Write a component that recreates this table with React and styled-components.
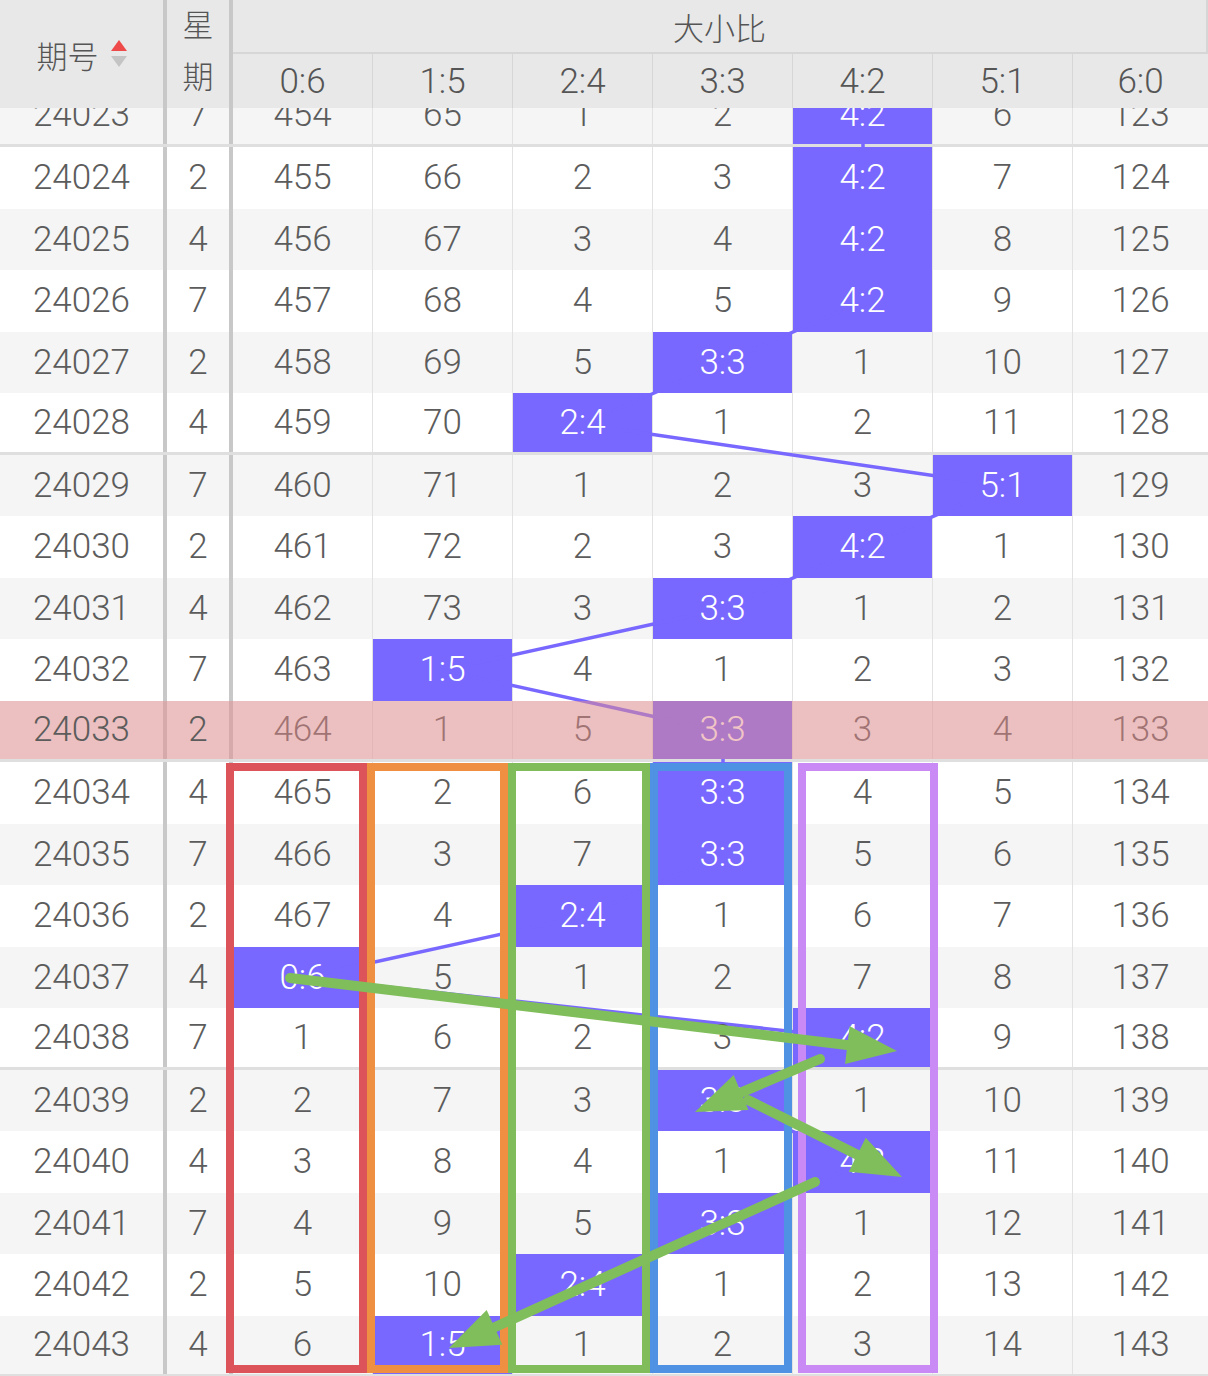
import React from 'react'
import styled, { createGlobalStyle } from 'styled-components'

const GlobalStyle = createGlobalStyle`
  html, body { margin: 0; padding: 0; background: #fff; }
  body { font-family: Roboto, "Noto Sans CJK SC", sans-serif; }
`

const COLS = '167px 66px repeat(6, 140px) 135px'
const ROW_H = 61.5
const RATIOS = ['0:6', '1:5', '2:4', '3:3', '4:2', '5:1', '6:0']
const COL_X = [233, 373, 513, 653, 793, 933, 1073]
const COL_W = [140, 140, 140, 140, 140, 140, 135]
const PURPLE = '#7868ff'

// which ratio came out in each issue, from 24023 on
const hits = [4, 4, 4, 4, 3, 2, 5, 4, 3, 1, 3, 3, 3, 2, 0, 4, 3, 4, 3, 2, 1]
const startMiss = [453, 64, 0, 1, 0, 5, 122]
const weeks = [7, 2, 4]
const HOT_ISSUE = 24033

function buildRows() {
  const miss = [...startMiss]
  return hits.map((hit, i) => {
    const cells = RATIOS.map((r, c) => {
      if (c === hit) {
        miss[c] = 0
        return r
      }
      miss[c] += 1
      return String(miss[c])
    })
    return { issue: 24023 + i, week: weeks[i % 3], hit, cells }
  })
}

const Page = styled.div`
  position: relative;
  width: 1208px;
  height: 1376px;
  overflow: hidden;
  background: #fff;
`

const Header = styled.div`
  position: relative;
  z-index: 10;
  display: grid;
  grid-template-columns: ${COLS};
  grid-template-rows: 54px 54px;
  height: 108px;
  background: #e8e8e8;
  color: #555;
  font-weight: 300;
`
const IssueHead = styled.div`
  grid-row: 1 / 3;
  display: flex;
  align-items: center;
  justify-content: center;
  gap: 12px;
  font-size: 31px;
  border-right: 4px solid #c8c8c8;
`
const WeekHead = styled.div`
  grid-row: 1 / 3;
  display: flex;
  flex-direction: column;
  align-items: center;
  font-size: 31px;
  line-height: 52px;
  border-right: 4px solid #c8c8c8;
`
const GroupHead = styled.div`
  grid-column: 3 / 10;
  display: flex;
  align-items: center;
  justify-content: center;
  font-size: 31px;
  border-bottom: 2px solid #d6d6d6;
  border-right: 2px solid #d6d6d6;
`
const SubHead = styled.div`
  display: flex;
  align-items: center;
  justify-content: center;
  font-size: 35px;
  border-right: ${p => (p.$last ? 'none' : '1px solid #d6d6d6')};
`

const Body = styled.div`
  position: relative;
  margin-top: -22.5px;
`
const Row = styled.div`
  position: relative;
  display: grid;
  grid-template-columns: ${COLS};
  height: ${ROW_H}px;
  box-sizing: border-box;
  background: ${p => (p.$alt ? '#f5f5f5' : '#fff')};
  border-bottom: ${p => (p.$divided ? '3px solid #dfdfdf' : 'none')};
  &::after {
    content: '';
    display: ${p => (p.$hot ? 'block' : 'none')};
    position: absolute;
    inset: 0;
    z-index: 3;
    background: rgba(228, 140, 140, 0.5);
  }
`
const Cell = styled.div`
  display: flex;
  align-items: center;
  justify-content: center;
  font-size: 35px;
  font-weight: 300;
  color: #5c5c5c;
  border-right: ${p => p.$edge};
  background: ${p => (p.$hit ? PURPLE : 'transparent')};
`
const CellText = styled.span`
  position: relative;
  z-index: ${p => (p.$front ? 4 : 2)};
  color: ${p => (p.$hit ? '#fff' : 'inherit')};
`

const Overlay = styled.svg`
  position: absolute;
  left: 0;
  top: 0;
  z-index: ${p => p.$z};
  pointer-events: none;
`

function SortIcon() {
  return (
    <svg width="16" height="28" viewBox="0 0 16 28">
      <polygon points="8,0 16,11 0,11" fill="#ef4a4a" />
      <polygon points="0,16 16,16 8,27" fill="#c4c4c4" />
    </svg>
  )
}

function center(rowIdx, col) {
  return [COL_X[col] + COL_W[col] / 2, rowIdx * ROW_H + ROW_H / 2]
}

function TrendLines({ rows }) {
  const h = rows.length * ROW_H
  const pts = rows.map((r, i) => center(i, r.hit))
  return (
    <Overlay $z={1} width="1208" height={h}>
      {pts.slice(1).map((p, i) => (
        <line key={i} x1={pts[i][0]} y1={pts[i][1]} x2={p[0]} y2={p[1]} stroke={PURPLE} strokeWidth="3.5" />
      ))}
    </Overlay>
  )
}

const boxes = [
  { x: 230, w: 133, color: '#dc545a' },
  { x: 371, w: 133, color: '#ef8f42' },
  { x: 512, w: 134, color: '#80bd5a' },
  { x: 654, w: 134, color: '#4f91e3' },
  { x: 802, w: 132, color: '#c98af6' },
]

const arrows = [
  [290, 978, 897, 1051],
  [820, 1059, 695, 1112],
  [748, 1100, 902, 1177],
  [815, 1182, 449, 1348],
]

function Arrow({ x1, y1, x2, y2, color }) {
  const dx = x2 - x1
  const dy = y2 - y1
  const len = Math.hypot(dx, dy)
  const ux = dx / len
  const uy = dy / len
  const head = 50
  const half = 19
  const bx = x2 - ux * head
  const by = y2 - uy * head
  const pts = [
    [x2, y2],
    [bx - uy * half, by + ux * half],
    [bx + uy * half, by - ux * half],
  ]
  return (
    <g>
      <line x1={x1} y1={y1} x2={bx + ux * 4} y2={by + uy * 4} stroke={color} strokeWidth="10" strokeLinecap="round" />
      <polygon points={pts.map(p => p.join(',')).join(' ')} fill={color} />
    </g>
  )
}

function Annotations() {
  return (
    <Overlay $z={20} width="1208" height="1376">
      {boxes.map((b, i) => (
        <rect key={i} x={b.x} y={767} width={b.w} height={602} fill="none" stroke={b.color} strokeWidth="8" />
      ))}
      {arrows.map((a, i) => (
        <Arrow key={i} x1={a[0]} y1={a[1]} x2={a[2]} y2={a[3]} color="#80be5b" />
      ))}
    </Overlay>
  )
}

export default function App() {
  const rows = buildRows()
  return (
    <Page>
      <GlobalStyle />
      <Header>
        <IssueHead>
          <span>期号</span>
          <SortIcon />
        </IssueHead>
        <WeekHead>
          <span>星</span>
          <span>期</span>
        </WeekHead>
        <GroupHead>大小比</GroupHead>
        {RATIOS.map((r, i) => (
          <SubHead key={r} $last={i === RATIOS.length - 1}>{r}</SubHead>
        ))}
      </Header>
      <Body>
        {rows.map((r, i) => {
          const hot = r.issue === HOT_ISSUE
          return (
            <Row key={r.issue} $alt={i % 2 === 0} $divided={i % 5 === 0} $hot={hot}>
              <Cell $edge="4px solid #c8c8c8">
                <CellText $front={hot}>{r.issue}</CellText>
              </Cell>
              <Cell $edge="4px solid #c8c8c8">
                <CellText $front={hot}>{r.week}</CellText>
              </Cell>
              {r.cells.map((v, c) => (
                <Cell key={c} $hit={c === r.hit} $edge={c === 6 ? 'none' : '1px solid #e2e2e2'}>
                  <CellText $hit={c === r.hit}>{v}</CellText>
                </Cell>
              ))}
            </Row>
          )
        })}
        <TrendLines rows={rows} />
      </Body>
      <Annotations />
    </Page>
  )
}
